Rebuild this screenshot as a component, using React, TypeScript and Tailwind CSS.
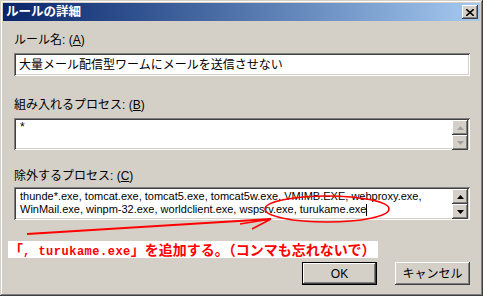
import React from "react";

const sunken =
  "bg-white shadow-[inset_1px_1px_0_#808080,inset_-1px_-1px_0_#ffffff,inset_2px_2px_0_#404040,inset_-2px_-2px_0_#d4d0c8]";
const raised =
  "bg-[#d4d0c8] shadow-[inset_-1px_-1px_0_#404040,inset_1px_1px_0_#ffffff,inset_-2px_-2px_0_#808080,inset_2px_2px_0_#d4d0c8]";

function ScrollBtn({ dir, enabled }: { dir: "up" | "down"; enabled: boolean }) {
  const fill = enabled ? "#000000" : "#a0a0a0";
  return (
    <div className={`w-[16px] h-[15px] flex items-center justify-center ${raised}`}>
      <svg width="7" height="4" viewBox="0 0 7 4">
        {dir === "up" ? (
          <polygon points="3.5,0 7,4 0,4" fill={fill} />
        ) : (
          <polygon points="0,0 7,0 3.5,4" fill={fill} />
        )}
      </svg>
    </div>
  );
}

export default function App() {
  return (
    <div
      className="relative w-[483px] h-[296px] bg-[#d4d0c8] text-[12px] text-black overflow-hidden shadow-[inset_-1px_-1px_0_#404040,inset_1px_1px_0_#d4d0c8,inset_-2px_-2px_0_#808080,inset_2px_2px_0_#ffffff]"
      style={{ fontFamily: '"Liberation Sans", "Noto Sans CJK JP", sans-serif' }}
    >
      {/* Title bar */}
      <div className="mx-[3px] mt-[3px] h-[18px] flex items-center justify-between pl-[3px] pr-[2px] bg-gradient-to-r from-[#0a246a] to-[#a6caf0]">
        <span className="text-white font-bold text-[12.5px] leading-none">ルールの詳細</span>
        <div className={`w-[16px] h-[14px] flex items-center justify-center ${raised}`}>
          <svg width="8" height="7" viewBox="0 0 8 7">
            <path d="M0 0L8 7M8 0L0 7" stroke="#000" strokeWidth="1.6" />
          </svg>
        </div>
      </div>

      {/* Body */}
      <div className="flex flex-col pl-[14px] pr-[13px]">
        <div className="mt-[12px] h-[14px] leading-[14px]">
          ルール名: (<span className="underline">A</span>)
        </div>
        <div className={`mt-[6px] h-[23px] px-[5px] flex items-center ${sunken}`}>
          大量メール配信型ワームにメールを送信させない
        </div>

        <div className="mt-[22px] h-[14px] leading-[14px]">
          組み入れるプロセス: (<span className="underline">B</span>)
        </div>
        <div className={`mt-[6px] h-[32px] flex ${sunken}`}>
          <div className="flex-1 pl-[6px] pt-[3px] leading-[13px]">*</div>
          <div className="flex flex-col pt-[2px] pr-[2px]">
            <ScrollBtn dir="up" enabled={false} />
            <ScrollBtn dir="down" enabled={false} />
          </div>
        </div>

        <div className="mt-[19px] h-[14px] leading-[14px]">
          除外するプロセス: (<span className="underline">C</span>)
        </div>
        <div className={`mt-[4px] h-[33px] flex ${sunken}`}>
          <div className="flex-1 pl-[6px] pt-[3px] leading-[13px] text-[11px] whitespace-nowrap">
            <div>thunde*.exe, tomcat.exe, tomcat5.exe, tomcat5w.exe, VMIMB.EXE, webproxy.exe,</div>
            <div>
              WinMail.exe, winpm-32.exe, worldclient.exe, wspsrv.exe, turukame.exe
              <span className="inline-block w-px h-[12px] bg-black align-middle" />
            </div>
          </div>
          <div className="flex flex-col pt-[2px] pr-[2px]">
            <ScrollBtn dir="up" enabled />
            <ScrollBtn dir="down" enabled />
          </div>
        </div>

        {/* Annotation */}
        <div className="mt-[21px] -ml-[6px] w-[370px] h-[17px] bg-white flex items-center pl-[1px]">
          <span
            className="text-[#ff0000] font-bold text-[14px] leading-none whitespace-nowrap"
            style={{ fontFamily: '"Noto Sans CJK JP", sans-serif' }}
          >
            「
            <span className="tracking-[0.5px]" style={{ fontFamily: '"Liberation Mono", monospace', fontWeight: 700, fontSize: "12px" }}>
              , turukame.exe
            </span>
            」を追加する。（コンマも忘れないで）
          </span>
        </div>

        {/* Buttons */}
        <div className="mt-[4px] flex justify-end gap-[18px]">
          <div className="w-[75px] h-[23px] p-px bg-black">
            <div className={`w-full h-full flex items-center justify-center ${raised}`}>OK</div>
          </div>
          <div className={`w-[75px] h-[23px] flex items-center justify-center ${raised}`}>
            キャンセル
          </div>
        </div>
      </div>

      {/* Red marker overlay */}
      <svg className="absolute left-0 top-0 pointer-events-none" width="483" height="296">
        <ellipse cx="327" cy="209" rx="62" ry="13" fill="none" stroke="#ff0000" strokeWidth="1.6" />
        <path d="M27 234 L271 219" stroke="#ff0000" strokeWidth="2" fill="none" />
        <path d="M240 224 L271 219 M252 229 L271 219" stroke="#ff0000" strokeWidth="1.6" fill="none" />
      </svg>
    </div>
  );
}
